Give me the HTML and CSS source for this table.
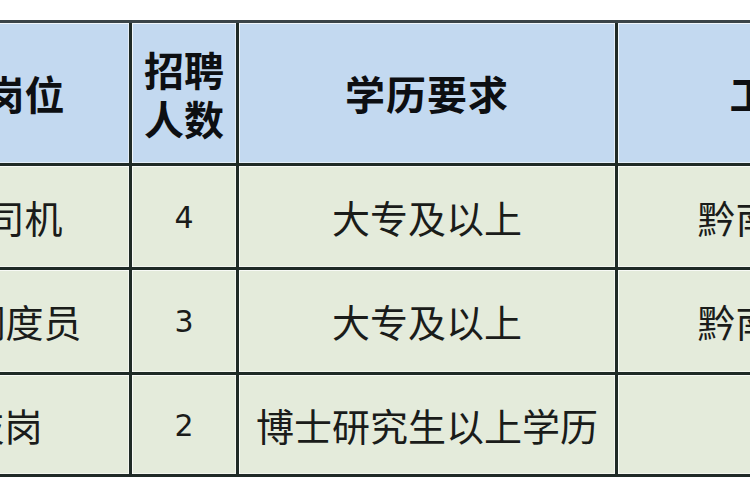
FILE: index.html
```html
<!DOCTYPE html>
<html lang="zh-CN">
<head>
<meta charset="utf-8">
<title>招聘岗位表</title>
<link rel="stylesheet" href="styles.css">
</head>
<body>
<div class="sheet">
  <table class="jobs">
    <colgroup>
      <col class="c-post">
      <col class="c-num">
      <col class="c-edu">
      <col class="c-place">
    </colgroup>
    <thead>
      <tr class="head-row">
        <th>岗位</th>
        <th class="two-line">招聘<br>人数</th>
        <th class="spaced">学历要求</th>
        <th class="spaced">工作地点</th>
      </tr>
    </thead>
    <tbody>
      <tr class="row-a">
        <td>司机</td>
        <td class="num">4</td>
        <td>大专及以上</td>
        <td>黔南州都匀市</td>
      </tr>
      <tr class="row-b">
        <td>调度员</td>
        <td class="num">3</td>
        <td>大专及以上</td>
        <td>黔南州都匀市</td>
      </tr>
      <tr class="row-c">
        <td class="shift">技岗</td>
        <td class="num">2</td>
        <td>博士研究生以上学历</td>
        <td>都匀</td>
      </tr>
    </tbody>
  </table>
</div>
</body>
</html>
```
FILE: styles.css
```css
html, body {
  margin: 0;
  padding: 0;
  background: #ffffff;
}
body {
  width: 750px;
  height: 500px;
  overflow: hidden;
  font-family: "Noto Sans CJK SC", "Noto Sans", sans-serif;
}
.sheet {
  padding-top: 20px;
  margin-left: -80px;
}
.jobs {
  border-collapse: separate;
  border-spacing: 0;
  table-layout: fixed;
  width: 1088px;
  border-top: 3px solid #3a4448;
}
.c-post { width: 212px; }
.c-num { width: 107px; }
.c-edu { width: 379px; }
.c-place { width: 390px; }

.jobs th,
.jobs td {
  box-sizing: border-box;
  padding: 0;
  border-right: 3px solid #1f2a26;
  border-bottom: 3px solid #1f2a26;
  text-align: center;
  vertical-align: middle;
  white-space: nowrap;
  overflow: hidden;
  box-shadow: inset 1px 1px 0 rgba(255,255,255,0.75), inset -1px -1px 0 rgba(255,255,255,0.55);
}
.jobs th {
  background: #c3d9f0;
  color: #0d0f12;
  font-weight: 700;
  font-size: 40px;
  height: 143px;
  line-height: 47px;
}
.jobs th.two-line {
  line-height: 49px;
  padding-top: 2px;
}
.jobs th.spaced {
  letter-spacing: 1px;
}
.jobs td {
  background: #e4ebdb;
  color: #1a1c1a;
  font-weight: 400;
  font-size: 38px;
  line-height: 44px;
}
.row-a td { height: 104px; }
.row-b td { height: 105px; }
.row-c td { height: 102px; }
.jobs td.num {
  font-family: "DejaVu Sans", sans-serif;
  font-size: 30px;
  padding-top: 2px;
}
.jobs td.shift {
  padding-right: 40px;
}
```
